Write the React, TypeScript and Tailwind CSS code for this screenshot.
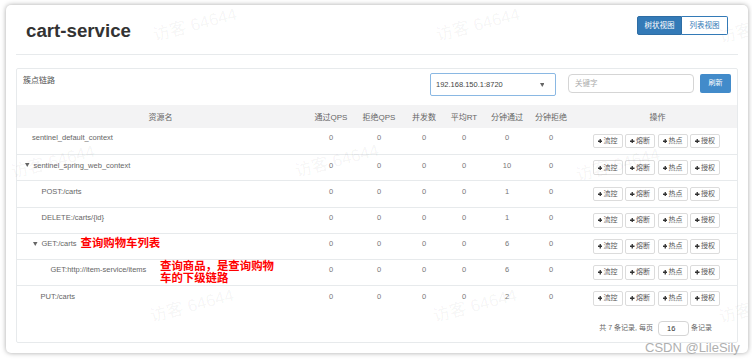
import React from 'react';

type Row = {
  name: string;
  indent: string;
  open?: boolean;
  note?: string;
  sub?: boolean;
  pass: string;
};

const rows: Row[] = [
  { name: 'sentinel_default_context', indent: 'pl-[15px]', pass: '0' },
  { name: 'sentinel_spring_web_context', indent: 'pl-[8px]', open: true, pass: '10' },
  { name: 'POST:/carts', indent: 'pl-[24.5px]', pass: '1' },
  { name: 'DELETE:/carts/{id}', indent: 'pl-[24.5px]', pass: '1' },
  { name: 'GET:/carts', indent: 'pl-[16px]', open: true, note: '查询购物车列表', pass: '6' },
  { name: 'GET:http://item-service/items', indent: 'pl-[33.5px]', sub: true, pass: '6' },
  { name: 'PUT:/carts', indent: 'pl-[23.5px]', pass: '2' },
];

const cols = 'grid grid-cols-[287px_54px_42px_48px_32px_54px_34px_1fr]';

// 水印位置（相对卡片）
const marks = [
  'left-[189px] top-[20px]',
  'left-[472px] top-[20px]',
  'left-[755px] top-[22px]',
  'left-[47px] top-[157px]',
  'left-[331px] top-[156px]',
  'left-[612px] top-[160px]',
  'left-[186px] top-[301px]',
  'left-[469px] top-[301px]',
  'left-[755px] top-[302px]',
];

function Plus() {
  return (
    <svg width="4.5" height="4.5" viewBox="0 0 10 10">
      <path d="M3.5 0h3v10h-3zM0 3.5h10v3H0z" fill="#333" />
    </svg>
  );
}

function Caret() {
  return (
    <svg width="4.5" height="4" viewBox="0 0 9 8">
      <path d="M0 0H9L4.5 8Z" fill="#666" />
    </svg>
  );
}

function OpButton({ label }: { label: string }) {
  return (
    <div className="w-[30px] h-[14.7px] border border-[#dcdcdc] rounded-[2px] bg-white flex items-center justify-center gap-[1.5px] text-[7px] text-[#555]">
      <Plus />
      <span>{label}</span>
    </div>
  );
}

export default function App() {
  return (
    <div className="relative w-[752px] h-[359px] bg-white pt-[5px] pl-[6px] overflow-hidden font-['Liberation_Sans','Noto_Sans_CJK_SC',sans-serif]">
      <div className="relative w-[742px] h-[348px] rounded-[5px] bg-white shadow-[0_0_5px_rgba(0,0,0,0.35)] px-[10px] overflow-hidden">
        <div className="flex justify-between h-[50px] border-b border-[#e7eaec]">
          <h1 className="mt-[15.6px] ml-[10px] text-[18.7px] leading-[19px] font-bold text-[#333]">cart-service</h1>
          <div className="mt-[11px] mr-[10px] flex h-[19px] text-[7.5px]">
            <div className="w-[45px] flex items-center justify-center bg-[#337ab7] border border-[#2e6da4] text-white rounded-l-[2px]">树状视图</div>
            <div className="w-[46px] flex items-center justify-center bg-white border border-l-0 border-[#337ab7] text-[#337ab7] rounded-r-[2px]">列表视图</div>
          </div>
        </div>

        <div className="mt-[13px] h-[275px] border border-[#e7eaec] rounded-[2px] flex flex-col">
          <div className="h-[36px] flex items-start">
            <div className="mt-[7px] pl-[6px] text-[8px] leading-[10px] text-[#555]">簇点链路</div>
            <div className="ml-auto mr-[6px] flex items-start">
              <div className="mt-[4.3px] w-[126px] h-[23px] border border-[#8ab8e3] rounded-[2px] flex items-center justify-between pl-[5px] pr-[11px] text-[7.5px] text-[#444]">
                <span>192.168.150.1:8720</span>
                <Caret />
              </div>
              <div className="mt-[5px] ml-[12px] w-[126px] h-[19px] border border-[#d5d5d5] rounded-[4px] flex items-center pl-[6px] text-[7.5px] text-[#aaa]">关键字</div>
              <div className="mt-[5px] ml-[6px] w-[31px] h-[18.5px] bg-[#428bca] rounded-[2px] flex items-center justify-center text-[7px] text-white">刷新</div>
            </div>
          </div>

          <div className={`${cols} h-[23px] bg-[#f3f3f4] text-[8px] text-[#666] pt-[2px]`}>
            {['资源名', '通过QPS', '拒绝QPS', '并发数', '平均RT', '分钟通过', '分钟拒绝'].map((h) => (
              <div key={h} className="flex items-center justify-center whitespace-nowrap">{h}</div>
            ))}
            <div className="flex items-center justify-center pl-[10px]">操作</div>
          </div>

          {rows.map((r, i) => (
            <div key={r.name} className={`${cols} h-[26.2px] ${i > 0 ? 'border-t border-[#e7eaec]' : ''} text-[7.5px] text-[#666]`}>
              <div className={`relative h-[20px] flex items-center whitespace-nowrap ${r.indent}`}>
                {r.open && (
                  <span className="mr-[4px] flex">
                    <Caret />
                  </span>
                )}
                <span>{r.name}</span>
                {r.note && (
                  <span className="ml-[4px] text-[11.4px] leading-none font-bold text-[#f00]">{r.note}</span>
                )}
                {r.sub && (
                  <div className="absolute left-[143px] top-[1px] text-[11.4px] leading-[11.7px] font-bold text-[#f00]">
                    查询商品，是查询购物
                    <br />
                    车的下级链路
                  </div>
                )}
              </div>
              {['0', '0', '0', '0', r.pass, '0'].map((v, j) => (
                <div key={j} className="h-[20px] flex items-center justify-center text-[#777]">{v}</div>
              ))}
              <div className="flex items-center pl-[24.5px] gap-[2.5px]">
                <OpButton label="流控" />
                <OpButton label="熔断" />
                <OpButton label="热点" />
                <OpButton label="授权" />
              </div>
            </div>
          ))}

          <div className="flex-1 flex items-center justify-end pr-[25px] pt-[4px] text-[7px] text-[#666]">
            <span>共 7 条记录, 每页</span>
            <div className="ml-[5px] mr-[2px] w-[31px] h-[15px] border border-[#d5d5d5] rounded-[4px] flex items-center pl-[8px] text-[7.5px] text-[#333]">16</div>
            <span>条记录</span>
          </div>
        </div>

        {marks.map((m) => (
          <div
            key={m}
            className={`pointer-events-none absolute ${m} -translate-x-1/2 -translate-y-1/2 -rotate-[15deg] whitespace-nowrap text-[17px] text-[rgba(0,0,0,0.05)]`}
          >
            访客 64644
          </div>
        ))}
      </div>

      <div className="pointer-events-none absolute left-[645px] top-[341px] text-[13px] leading-[13px] text-[#b0b0b0] whitespace-nowrap">
        CSDN @LileSily
      </div>
    </div>
  );
}
